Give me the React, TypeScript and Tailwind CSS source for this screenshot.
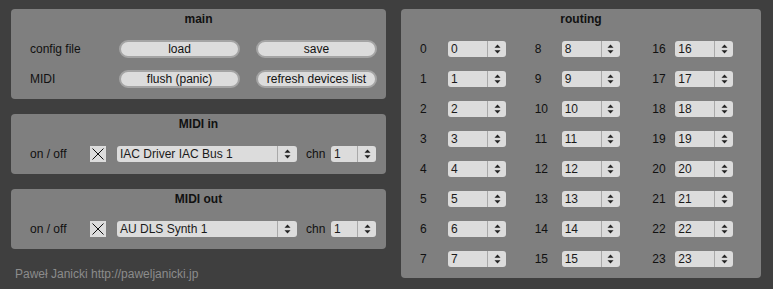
import React from "react";

const font = { fontFamily: '"Liberation Sans", Arial, sans-serif' };

function Arrows() {
  return (
    <svg width="7" height="10" viewBox="0 0 7 10">
      <path d="M3.5 0.5 L6.5 3.8 L0.5 3.8 Z" fill="#222" />
      <path d="M0.5 6.2 L6.5 6.2 L3.5 9.5 Z" fill="#222" />
    </svg>
  );
}

function NumBox({ value, w, arrowW }: { value: string; w: string; arrowW: string }) {
  return (
    <div className={`flex h-[16px] ${w} rounded-[3px] bg-[#dcdcdc] overflow-hidden`}>
      <div className="flex-1 pl-[3px] text-[12px] leading-[16px] text-[#1a1a1a] whitespace-nowrap overflow-hidden">
        {value}
      </div>
      <div className={`${arrowW} border-l border-[#a9a9a9] flex items-center justify-center`}>
        <Arrows />
      </div>
    </div>
  );
}

function Btn({ label }: { label: string }) {
  return (
    <div className="w-[121px] h-[18px] rounded-full border-2 border-[#a4a4a4] bg-[#dcdcdc] flex items-center justify-center text-[12px] text-[#111] leading-none">
      {label}
    </div>
  );
}

function Title({ children }: { children: React.ReactNode }) {
  return (
    <div className="h-[20px] leading-[20px] text-center text-[12px] font-bold text-[#111]">{children}</div>
  );
}

function Checkbox() {
  return (
    <div className="w-[16px] h-[16px] bg-[#dcdcdc] flex items-center justify-center">
      <svg width="16" height="16" viewBox="0 0 16 16">
        <path d="M2.5 2.5 L13.5 13.5 M13.5 2.5 L2.5 13.5" stroke="#111" strokeWidth="1" />
      </svg>
    </div>
  );
}

function MidiPanel({ title, device }: { title: string; device: string }) {
  return (
    <div className="h-[60px] rounded-[4px] bg-[#7f7f7f] flex flex-col">
      <Title>{title}</Title>
      <div className="mt-[12px] h-[16px] flex items-center pl-[19px] text-[12px] text-[#111]">
        <div className="w-[60px]">on / off</div>
        <Checkbox />
        <div className="ml-[11px]">
          <NumBox value={device} w="w-[180px]" arrowW="w-[20px]" />
        </div>
        <div className="ml-[9px] w-[25px]">chn</div>
        <NumBox value="1" w="w-[45px]" arrowW="w-[19px]" />
      </div>
    </div>
  );
}

export default function App() {
  const cols = [0, 1, 2];
  const rows = [0, 1, 2, 3, 4, 5, 6, 7];
  return (
    <div className="w-[773px] h-[289px] bg-[#3f3f3f] flex gap-[15px] pl-[11px] pt-[9px]" style={font}>
      <div className="w-[375px] flex flex-col">
        <div className="h-[90px] rounded-[4px] bg-[#7f7f7f] flex flex-col">
          <Title>main</Title>
          <div className="mt-[11px] h-[18px] flex items-center pl-[19px] text-[12px] text-[#111]">
            <div className="w-[89px]">config file</div>
            <Btn label="load" />
            <div className="ml-[16px]">
              <Btn label="save" />
            </div>
          </div>
          <div className="mt-[12px] h-[18px] flex items-center pl-[19px] text-[12px] text-[#111]">
            <div className="w-[89px]">MIDI</div>
            <Btn label="flush (panic)" />
            <div className="ml-[16px]">
              <Btn label="refresh devices list" />
            </div>
          </div>
        </div>
        <div className="mt-[15px]">
          <MidiPanel title="MIDI in" device="IAC Driver IAC Bus 1" />
        </div>
        <div className="mt-[15px]">
          <MidiPanel title="MIDI out" device="AU DLS Synth 1" />
        </div>
        <div className="mt-[18px] pl-[4px] h-[14px] leading-[14px] text-[12px] text-[#8c8c8c]">
          Paweł Janicki http://paweljanicki.jp
        </div>
      </div>
      <div className="w-[360px] h-[269px] rounded-[4px] bg-[#7f7f7f] flex flex-col">
        <Title>routing</Title>
        <div className="mt-[12px] pl-[19px] flex">
          {cols.map((c) => (
            <div key={c} className="w-[120px] flex flex-col gap-[14px]">
              {rows.map((r) => {
                const n = String(c * 8 + r);
                return (
                  <div key={r} className="h-[16px] flex items-center text-[12px] text-[#111]">
                    <div className={c === 2 ? "w-[28px] pl-[5px]" : c === 1 ? "w-[28px] pl-[1px]" : "w-[28px]"}>{n}</div>
                    <NumBox value={n} w="w-[58px]" arrowW="w-[19px]" />
                  </div>
                );
              })}
            </div>
          ))}
        </div>
      </div>
    </div>
  );
}
